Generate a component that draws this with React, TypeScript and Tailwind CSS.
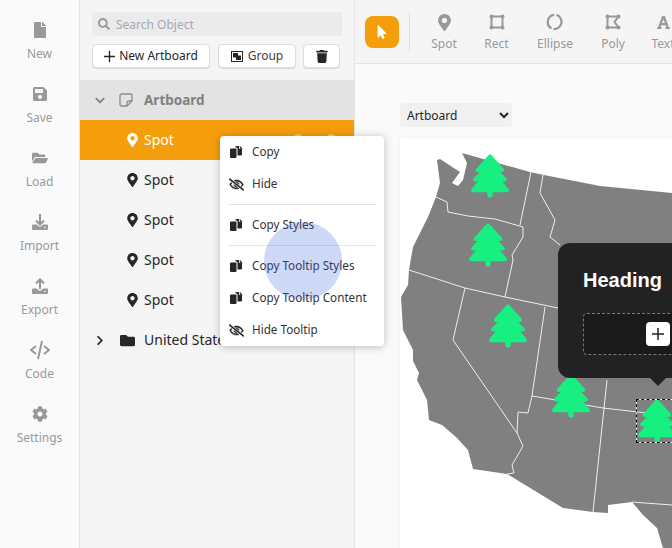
import React from "react";
import { FaFile, FaSave, FaFolderOpen, FaCog, FaSearch, FaTrash, FaMapMarkerAlt, FaFolder, FaChevronRight, FaChevronDown, FaFont, FaMousePointer, FaRegEyeSlash } from "react-icons/fa";
import { FaTree } from "react-icons/fa6";
import { BiCodeAlt } from "react-icons/bi";

const F = { fontFamily: '"Noto Sans", sans-serif' };

function Tray({ up }: { up?: boolean }) {
  return (
    <svg width="16" height="16" viewBox="0 0 16 16" fill="currentColor">
      <path d="M1 10.5h3.5L8 13l3.5-2.5H15a1 1 0 0 1 1 1V15a1 1 0 0 1-1 1H1a1 1 0 0 1-1-1v-3.5a1 1 0 0 1 1-1z" />
      <circle cx="13" cy="13.5" r="0.8" fill="#fafafa" />
      {up ? (
        <path d="M8 11V1.5M4 5.5l4-4 4 4" fill="none" stroke="currentColor" strokeWidth="2" />
      ) : (
        <path d="M8 0v10M4 6.5l4 4 4-4" fill="none" stroke="currentColor" strokeWidth="2" />
      )}
    </svg>
  );
}

function CopyIcon() {
  return (
    <svg width="13" height="12" viewBox="0 0 13 12" fill="currentColor">
      <path d="M1 2.5h5.5v8.5a1 1 0 0 1-1 1H1a1 1 0 0 1-1-1V3.500a1 1 0 0 1 1-1z" />
      <path d="M5.500 0.500a1 1 0 0 1 1-0.500h2.500v3h3v5.500a1 1 0 0 1-1 1H7.500V2.500a1 1 0 0 0-1-1h-1z" />
      <path d="M9.800 0l3 2.800h-3z" />
    </svg>
  );
}

function Plus({ size = 11 }: { size?: number }) {
  return (
    <svg width={size} height={size} viewBox="0 0 12 12" fill="none" stroke="currentColor" strokeWidth="1.5">
      <path d="M6 0v12M0 6h12" />
    </svg>
  );
}

function NoteIcon() {
  return (
    <svg width="14" height="14" viewBox="0 0 14 14" fill="none" stroke="#8c8c8c" strokeWidth="1.300">
      <path d="M2.500 1h9A1.500 1.500 0 0 1 13 2.500V8l-5 5H2.500A1.500 1.500 0 0 1 1 11.500v-9A1.500 1.500 0 0 1 2.500 1z" />
      <path d="M13 8H9.500A1.500 1.500 0 0 0 8 9.500V13" />
    </svg>
  );
}

function GroupIcon() {
  return (
    <svg width="12" height="11" viewBox="0 0 12 11">
      <rect x="0.500" y="0.500" width="11" height="10" fill="none" stroke="#262626" />
      <path d="M2 2h5v2.500h3V9H5V6.500H2z" fill="#262626" />
    </svg>
  );
}

function RectIcon() {
  return (
    <svg width="16" height="16" viewBox="0 0 16 16" fill="none" stroke="currentColor" strokeWidth="2">
      <rect x="2.500" y="2.500" width="11" height="11" />
      <g fill="currentColor" stroke="none">
        <circle cx="2.500" cy="2.500" r="2" />
        <circle cx="13.500" cy="2.500" r="2" />
        <circle cx="2.500" cy="13.500" r="2" />
        <circle cx="13.500" cy="13.500" r="2" />
      </g>
    </svg>
  );
}

function PolyIcon() {
  return (
    <svg width="16" height="16" viewBox="0 0 16 16" fill="none" stroke="currentColor" strokeWidth="2">
      <path d="M2.500 2.500H13.500L9.500 8l4 5.500H2.500z" />
      <g fill="currentColor" stroke="none">
        <circle cx="2.500" cy="2.500" r="2" />
        <circle cx="13.500" cy="2.500" r="2" />
        <circle cx="2.500" cy="13.500" r="2" />
        <circle cx="13.500" cy="13.500" r="2" />
      </g>
    </svg>
  );
}

function EllipseIcon() {
  return (
    <svg width="18" height="18" viewBox="0 0 18 18" fill="none" stroke="currentColor" strokeWidth="2.200">
      <path d="M10.500 1.900A7.300 7.300 0 0 1 7.500 16.100" />
      <path d="M5.500 15.400A7.300 7.300 0 0 1 8.200 1.800" />
    </svg>
  );
}

function HideIcon() {
  return <FaRegEyeSlash className="w-[15px] h-[13px]" stroke="currentColor" strokeWidth={24} />;
}

const side: [string, React.ReactNode][] = [
  ["New", <FaFile className="text-[16px]" />],
  ["Save", <FaSave className="text-[16px]" />],
  ["Load", <FaFolderOpen className="text-[16px]" />],
  ["Import", <Tray />],
  ["Export", <Tray up />],
  ["Code", <BiCodeAlt className="text-[24px]" />],
  ["Settings", <FaCog className="text-[16px]" />],
];

function Spot({ active }: { active?: boolean }) {
  return (
    <div className={`h-10 flex items-center pl-[47px] gap-[6px] text-sm ${active ? "bg-[#f59e0b] text-white" : "text-[#262626]"}`}>
      <FaMapMarkerAlt className="w-[11px] h-[14px]" />
      <span>Spot</span>
      {active && (
        <div className="ml-auto flex gap-[23px] pr-[18px]">
          <span className="block w-[10px] h-[12px] rounded-full bg-white/40" />
          <span className="block w-[10px] h-[12px] rounded-full bg-white/40" />
        </div>
      )}
    </div>
  );
}

function Tool({ label, icon, w }: { label: string; icon: React.ReactNode; w: string }) {
  return (
    <div className={`flex flex-col items-center shrink-0 text-[#999] ${w}`}>
      <div className="h-5 flex items-center text-[17px]">{icon}</div>
      <span className="text-xs mt-[4px]">{label}</span>
    </div>
  );
}

function MenuItem({ icon, label }: { icon: React.ReactNode; label: string }) {
  return (
    <div className="relative flex items-center h-8 pl-[9px] gap-[8px] text-[11.700px] text-[#333]">
      <span className="w-[15px] flex justify-center text-[#262626]">{icon}</span>
      <span>{label}</span>
    </div>
  );
}

const land =
  "M62 15 L130 34 L144 37 L200 48 L272 55 L272 410 L263 410 L257 390 L243 377 L232 364 L208 367 L208 375 L193 374 L163 370 L107 336 L73 331 L68 312 L57 300 L42 287 L29 282 L27 262 L17 242 L19 235 L13 223 L13 212 L7 200 L3 192 L1 159 L8 147 L9 132 L13 109 L28 79 L36 59 L40 45 L37 22 L40 21 L60 34 L52 45 L58 48 L63 42 L67 25 Z";
const lines = [
  "M36 59 L47 64 L48 74 L68 78 L95 81 L123 89",
  "M131 34 L120 87",
  "M123 89 L123 99 L112 117 L113 122 L105 159",
  "M9 132 L65 150 L105 159 L158 170",
  "M143 37 L140 55 L155 82 L150 99 L160 107",
  "M65 150 L53 202 L117 295",
  "M145 169 L132 258 L128 275 L118 274 L117 295 L123 308 L112 327 L114 335 L107 336",
  "M132 258 L203 270 L247 275",
  "M207 242 L193 374",
  "M232 364 L272 367",
];

function Tree({ x, y }: { x: number; y: number }) {
  return (
    <div className="absolute" style={{ left: x, top: y }}>
      <FaTree className="w-[38px] h-[44px] text-[#17ef80] block" />
    </div>
  );
}

const btn = "h-6 rounded bg-white border border-[#ddd] shadow-[0_1px_1px_#0000001a] flex items-center justify-center text-xs";

export default function App() {
  return (
    <div className="relative w-[672px] h-[548px] overflow-hidden flex bg-white" style={F}>
      <aside className="w-20 shrink-0 bg-[#fafafa] border-r border-[#e5e5e5] pt-[18px] flex flex-col">
        {side.map(([label, icon]) => (
          <div key={label} className="h-16 flex flex-col items-center text-[#999]">
            <div className="h-6 flex items-center">{icon}</div>
            <span className="text-xs mt-[4px]">{label}</span>
          </div>
        ))}
      </aside>

      <section className="w-[275px] shrink-0 bg-[#f5f5f5] border-r border-[#e5e5e5] flex flex-col">
        <div className="pt-3 px-3 h-20 shrink-0">
          <div className="h-6 rounded bg-[#ebebeb] flex items-center pl-[6px] gap-[6px] text-xs text-[#a3a9b5]">
            <FaSearch className="text-[12px] text-[#999]" />
            <span className="pt-[1px]">Search Object</span>
          </div>
          <div className="flex mt-2">
            <div className={`${btn} w-[118px] gap-[4px] text-[#262626]`}>
              <Plus />
              <span>New Artboard</span>
            </div>
            <div className={`${btn} w-[78px] ml-2 gap-[5px] text-[#404040]`}>
              <GroupIcon />
              <span>Group</span>
            </div>
            <div className={`${btn} w-[37px] ml-[7px] text-[#262626]`}>
              <FaTrash className="h-[13px]" />
            </div>
          </div>
        </div>
        <div className="h-10 bg-[#e3e3e3] flex items-center pl-[14px] text-[13.500px] font-bold text-[#808080]">
          <FaChevronDown className="text-[11px] w-3" />
          <span className="ml-[13px]"><NoteIcon /></span>
          <span className="ml-[11px]">Artboard</span>
        </div>
        <Spot active />
        <Spot />
        <Spot />
        <Spot />
        <Spot />
        <div className="h-10 flex items-center pl-[15px] text-sm text-[#262626]">
          <FaChevronRight className="text-[11px] w-[10px]" />
          <FaFolder className="ml-[15px] text-[15px]" />
          <span className="ml-[9px] whitespace-nowrap">United States</span>
        </div>
      </section>

      <main className="flex-1 min-w-0 bg-[#fafafa] flex flex-col">
        <div className="h-16 shrink-0 bg-[#f5f5f5] border-b border-[#e5e5e5] flex items-start pl-[10px] pt-3 overflow-hidden">
          <div className="mt-1 w-[34px] h-8 shrink-0 rounded-lg bg-[#f59e0b] flex items-center justify-center text-white">
            <FaMousePointer className="h-[14px]" />
          </div>
          <div className="ml-[10px] w-px h-10 shrink-0 bg-[#e0e0e0]" />
          <div className="flex pl-[5px]">
            <Tool label="Spot" w="w-[58px]" icon={<FaMapMarkerAlt />} />
            <Tool label="Rect" w="w-[47px]" icon={<RectIcon />} />
            <Tool label="Ellipse" w="w-[70px]" icon={<EllipseIcon />} />
            <Tool label="Poly" w="w-[46px]" icon={<PolyIcon />} />
            <Tool label="Text" w="w-[54px]" icon={<FaFont className="text-[15px]" />} />
          </div>
        </div>

        <div className="relative flex-1">
          <select className="absolute left-[45px] top-[39px] w-28 h-6 rounded bg-[#f0f0f0] text-xs text-[#262626] pl-[3px]" style={F} defaultValue="Artboard">
            <option>Artboard</option>
          </select>

          <div className="absolute left-[45px] top-[74px] w-[500px] h-[500px] bg-white shadow-[0_0_4px_#0000000f]">
            <svg className="absolute left-0 top-0" width="272" height="410" viewBox="0 0 272 410">
              <path d={land} fill="#808080" />
              {lines.map((d) => (
                <path key={d} d={d} fill="none" stroke="#eee" strokeWidth="1" />
              ))}
            </svg>
            <Tree x={71} y={16} />
            <Tree x={69} y={85} />
            <Tree x={89} y={166} />
            <Tree x={152} y={236} />
            <Tree x={238} y={261} />
            <div className="absolute left-[236px] top-[261px] w-[50px] h-11 border border-white">
              <div className="absolute -inset-px border border-dashed border-black" />
            </div>

            <div className="absolute left-[158px] top-[105px] w-[300px] h-[135px] rounded-xl bg-[#222] px-[25px] pt-6">
              <div className="text-[20px] font-bold text-white leading-[26px]" style={{ fontFamily: '"Liberation Sans", sans-serif' }}>Heading</div>
              <div className="relative mt-5 h-[42px] rounded border border-dashed border-[#777] bg-[#1a1a1a]">
                <div className="absolute left-[62px] top-2 w-6 h-6 rounded bg-white flex items-center justify-center text-[#222]">
                  <Plus size={12} />
                </div>
              </div>
              <div className="absolute left-[92px] top-[135px] w-0 h-0 border-x-[8px] border-x-transparent border-t-[8px] border-t-[#222]" />
            </div>
          </div>
        </div>
      </main>

      <div className="absolute left-[220px] top-[136px] w-[164px] h-[210px] rounded bg-white shadow-[0_1px_8px_#00000040]">
        <MenuItem icon={<CopyIcon />} label="Copy" />
        <MenuItem icon={<HideIcon />} label="Hide" />
        <div className="mx-2 my-1 h-px bg-[#e5e5e5]" />
        <MenuItem icon={<CopyIcon />} label="Copy Styles" />
        <div className="mx-2 my-1 h-px bg-[#e5e5e5]" />
        <MenuItem icon={<CopyIcon />} label="Copy Tooltip Styles" />
        <MenuItem icon={<CopyIcon />} label="Copy Tooltip Content" />
        <MenuItem icon={<HideIcon />} label="Hide Tooltip" />
        <div className="absolute left-[44px] top-[86px] w-[78px] h-[78px] rounded-full bg-[#3b63e0]/25" />
      </div>
    </div>
  );
}
